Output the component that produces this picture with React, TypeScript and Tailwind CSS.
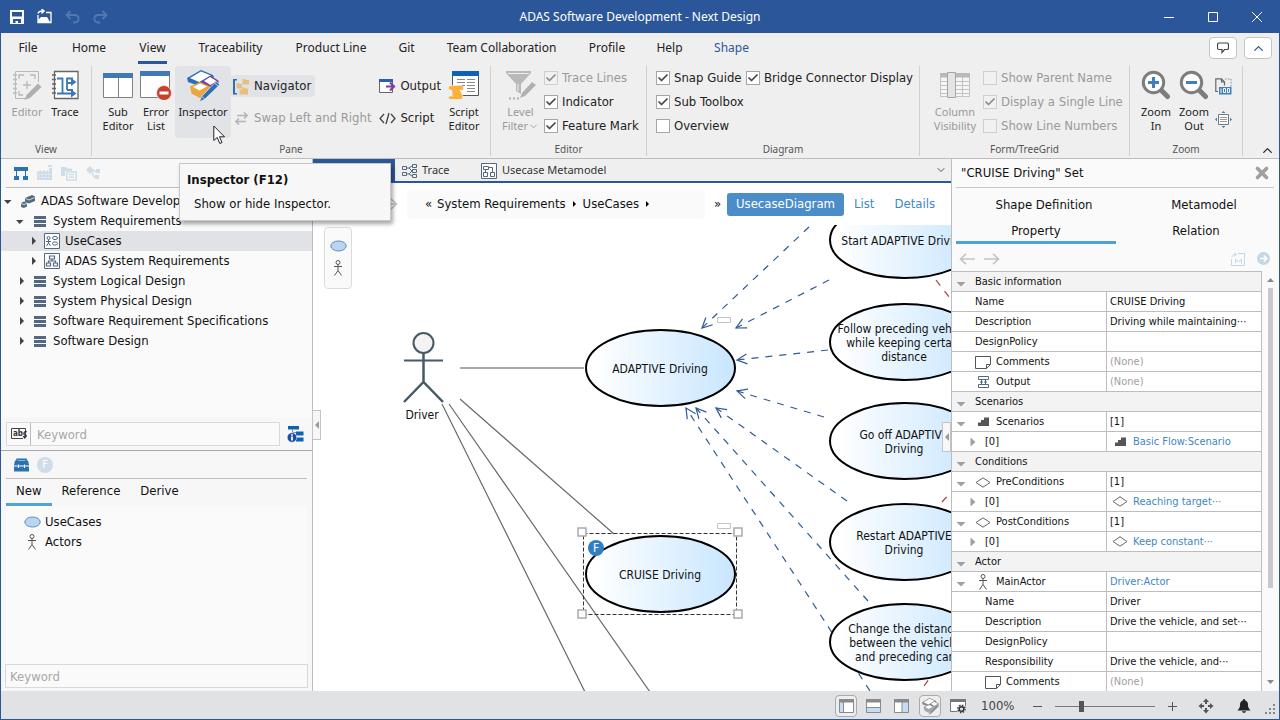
import { useState, type ReactNode } from "react";
import { Check, ChevronDown, ChevronUp, X } from "lucide-react";

const TABS = [
  { name: "File", className: "w-[54px]" },
  { name: "Home", className: "w-[68px]" },
  { name: "View", className: "w-[59px]" },
  { name: "Traceability", className: "w-[97px]" },
  { name: "Product Line", className: "w-[104px]" },
  { name: "Git", className: "w-[47px]" },
  { name: "Team Collaboration", className: "w-[143px]" },
  { name: "Profile", className: "w-[68px]" },
  { name: "Help", className: "w-[57px]" },
  { name: "Shape", className: "w-[67px] text-[#2b579a]" },
];

/* ---------- icons ---------- */

function SaveIcon() {
  return (
    <svg width="14" height="14" viewBox="0 0 14 14">
      <path fill="#fff" fillRule="evenodd" d="M0 0H14V14H0zM2 2V6.5H12V2zM3 9V13H5.5V11H8V13H11V9z" />
    </svg>
  );
}

function ReopenIcon() {
  return (
    <svg width="15" height="15" viewBox="0 0 15 15">
      <path fill="none" stroke="#fff" strokeWidth="1.3" d="M1 6V13.5H14V3.5H9" />
      <path fill="#fff" d="M1 13V11L4 8H10L13 13z" />
      <path fill="none" stroke="#fff" strokeWidth="1.5" d="M1 4.500C1.500 2.500 3 2 6 2M4.500 0L7 2L4.500 4.500" />
    </svg>
  );
}

function UndoIcon({ flip = false }: { flip?: boolean }) {
  return (
    <svg width="15" height="14" viewBox="0 0 15 14" fill="none" stroke="#5378b0" strokeWidth="1.8" className={flip ? "-scale-x-100" : ""}>
      <path d="M5.500 1L1.500 5L5.500 9M1.500 5H9.500C15 5 15 12.500 9.500 12.500H8" />
    </svg>
  );
}

function EditorIcon() {
  return (
    <svg width="30" height="30" viewBox="0 0 30 30" fill="none" stroke="#b9b9b9">
      <path d="M3.500 1.500H26.500V12M16 28.500H3.500V1.500" />
      <path strokeWidth="1.5" d="M1 5H5M1 9.500H5M1 14H5M1 18.500H5M1 23H5" />
      <path strokeWidth="1.3" d="M7 9V5H12M18 5H23V9M7 21V25H11M15 11V19M11 15H19" />
      <path fill="#b0b0b0" stroke="none" d="M12.500 30L14.500 25L26 13.500L29.500 17L18 28z" />
    </svg>
  );
}

function TraceIcon() {
  return (
    <svg width="28" height="30" viewBox="0 0 28 30" fill="none">
      <path fill="#fff" stroke="#666" strokeWidth="1.3" d="M3.500 1.500H27V28.500H3.500z" />
      <path stroke="#666" strokeWidth="1.5" d="M1 5H5M1 9.500H5M1 14H5M1 18.500H5M1 23H5" />
      <path stroke="#3a78b8" strokeWidth="1.8" d="M6 8.500H11.500V23.500H22M6 23.500H11.500M16 20V8.500H22M16 20H22M16 13H22" />
      <path fill="#3a78b8" d="M20 8L25.500 12L20 16zM20 19.500L25.500 23.500L20 27.500z" />
    </svg>
  );
}

function SubEditorIcon() {
  return (
    <svg width="30" height="30" viewBox="0 0 30 30">
      <path fill="#fff" stroke="#808080" d="M.5 3.500H29.500V27.500H.5zM15.500 8V27" />
      <path fill="#4079b5" d="M0 3H30V8H0z" />
    </svg>
  );
}

function ErrorListIcon() {
  return (
    <svg width="32" height="30" viewBox="0 0 32 30">
      <path fill="#fff" stroke="#808080" d="M.5 1.500H29.500V27.500H.5z" />
      <path fill="#4079b5" d="M0 1H30V6H0z" />
      <circle cx="24" cy="23" r="7.500" fill="#c9402c" stroke="#efefef" strokeWidth=".8" />
      <path fill="#fff" d="M19.500 21.500H28.500V24.500H19.500z" />
    </svg>
  );
}

function InspectorIcon({ mono = false }: { mono?: boolean }) {
  const blue = mono ? "#8a8a8a" : "#2c6fb5";
  const purple = mono ? "#8a8a8a" : "#7b3fa0";
  const orange = mono ? "#a5a5a5" : "#eda63f";
  return (
    <svg className={mono ? "size-[17px]" : "size-8"} viewBox="0 0 32 32">
      <path fill={blue} d="M0 8L14 0L26 5L27 7.500L12 16L1 12z" />
      <path fill="#fff" d="M3 8L14 1.500L24 5.500L12 12z" />
      <path fill={purple} d="M15 11.500L23 5.500L31.500 10.500V13L24 18.500L15 14z" />
      <path fill="#fff" d="M17 11L23 7L29.500 11L23.500 15z" />
      <path fill={orange} d="M3 16.500L13 12L23 16.500V21L13.500 28.500L4.500 23.500z" />
      <path fill="#fff" d="M6 17L13.500 13.500L20 16.500L12.500 20.500z" />
      <path fill={blue} stroke="#efefef" strokeWidth=".7" d="M12.500 32L14.500 26.500L29 11.500L33 14.500L18 29z" />
      <path stroke="#fff" strokeWidth=".7" d="M15 26.500L17.500 28.800M27.500 13L31 16" />
    </svg>
  );
}

function NavigatorIcon() {
  return (
    <svg width="17" height="17" viewBox="0 0 17 17">
      <path fill="#2c6fb5" d="M0 1H4V2.500H2V15H4V16.500H0z" />
      <path fill="#e8bf7d" d="M9.500 1H12L13 2H16V6.500H9.500zM3.500 5H6L7 6H9V10.500H3.500zM9 9.500H11.500L12.500 10.500H15V16.500H6.500V11.500H9z" />
    </svg>
  );
}

function SwapIcon() {
  return (
    <svg width="13" height="13" viewBox="0 0 13 13" fill="none" stroke="#b5b5b5" strokeWidth="1.6">
      <path d="M2 3.500H12M9 .5L12 3.500L9 6.500M11 9.500H1M4 6.500L1 9.500L4 12.500" />
    </svg>
  );
}

function OutputIcon() {
  return (
    <svg width="17" height="15" viewBox="0 0 17 15">
      <path fill="#fff" stroke="#666" d="M.5 1V13.500H13.500V1z" />
      <path fill="#2c5fa5" d="M0 0H14V3H0z" />
      <path stroke="#fff" strokeWidth="4" d="M5 7.500H13" />
      <path fill="none" stroke="#7b3fa0" strokeWidth="2.200" d="M7 7.500H14.500M11 3.500L15 7.500L11 11.500" />
    </svg>
  );
}

function ScriptIcon() {
  return (
    <svg width="17" height="13" viewBox="0 0 17 13" fill="none" stroke="#444" strokeWidth="1.300">
      <path d="M5 2L1 6.500L5 11M12 2L16 6.500L12 11M10 1L7 12" />
    </svg>
  );
}

function ScriptEditorIcon() {
  return (
    <svg width="32" height="30" viewBox="0 0 32 30">
      <path fill="#fff" stroke="#555" d="M4.500 2V25.500H30.500V2z" />
      <path fill="#0f60b8" d="M4 1H31V6H4z" />
      <path stroke="#888" d="M9 9.500H17M9 12.500H17M9 15.500H17M19 9.500H27M19 12.500H27M19 15.500H27M19 18.500H27M19 21.500H27" />
      <path fill="#fbb03b" stroke="#efefef" strokeWidth=".8" d="M3 15.500H13C16.500 15.500 16 20.500 13.500 20.500L12 20L14.500 25C15.500 28 14 29.500 12 29.500H3C0 29.500 0 26 2 26H5L3.500 20H2C0 20 0 15.500 3 15.500z" />
    </svg>
  );
}

function FilterIcon() {
  return (
    <svg width="32" height="30" viewBox="0 0 32 30">
      <path fill="#b9b9b9" d="M1 1H26V3L16 14V24L11 21V14L1 3z" />
      <path stroke="#efefef" d="M3 3.500H24" />
      <path stroke="#efefef" d="M13 14V21" />
      <path fill="#b0b0b0" d="M15 28L17 23L27 12L31 15L20 26z" />
      <path stroke="#b0b0b0" strokeWidth="2" strokeDasharray="2 2" d="M4 28.500H16" />
    </svg>
  );
}

function ColumnsIcon() {
  return (
    <svg width="30" height="30" viewBox="0 0 30 30" fill="none" stroke="#c3c3c3">
      <path fill="#f6f6f6" d="M.5 3.500H29.500V26.500H.5zM0 11.500H30M0 15.500H30M0 19.500H30M0 23.500H30M22.500 7V27" />
      <path fill="#b9b9b9" stroke="none" d="M0 3H30V7.500H0z" />
      <path fill="#e4e4e4" stroke="#a5a5a5" d="M7.500 2.500H15.500V27.500H7.500z" />
    </svg>
  );
}

function MagnifierIcon({ plus = false }: { plus?: boolean }) {
  return (
    <svg width="30" height="30" viewBox="0 0 30 30">
      <path stroke="#7d7d7d" strokeWidth="5" strokeLinecap="round" d="M20 20L26.500 26.500" />
      <circle cx="12.500" cy="12.500" r="10.200" fill="#fff" stroke="#7d7d7d" strokeWidth="3" />
      <path stroke="#3f7fbf" strokeWidth="3" d={plus ? "M7 12.500H18M12.500 7V18" : "M7 12.500H18"} />
    </svg>
  );
}

function Zoom100Icon() {
  return (
    <svg width="17" height="17" viewBox="0 0 17 17" fill="none">
      <path stroke="#666" strokeWidth="1.200" d="M3 13.500H.8V.8H6.500L9.500 4V7.500M6.500 1V4H9.500" />
      <path stroke="#888" strokeDasharray="1.500 1.500" d="M10 1H16V9" />
      <path fill="#3f7fbf" d="M4 9H16.500V16.500H4z" />
      <path stroke="#fff" d="M6 10.500V15M8.500 10.500H10.500V14.500H8.500zM12.500 10.500H14.500V14.500H12.500z" />
    </svg>
  );
}

function FitIcon() {
  return (
    <svg width="17" height="17" viewBox="0 0 17 17">
      <path fill="#fff" stroke="#777" d="M3.500 3.500H13.500V13.500H3.500z" />
      <path stroke="#999" d="M5 6.500H12M5 8.500H12M5 10.500H12" />
      <path fill="#3f7fbf" d="M6.500 2L8.500 0L10.500 2zM6.500 15L8.500 17L10.500 15zM2 6.500L0 8.500L2 10.500zM15 6.500L17 8.500L15 10.500z" />
    </svg>
  );
}

function TreeViewIcon() {
  return (
    <svg width="14" height="13" viewBox="0 0 14 13">
      <path fill="#2a72b0" d="M0 0H14V4H0zM0 9H5V13H0zM9 9H14V13H9z" />
      <path stroke="#2a72b0" d="M2.500 4V9M11.500 4V9" />
    </svg>
  );
}

function FactoryIcon() {
  return (
    <svg width="17" height="16" viewBox="0 0 17 16" fill="#cfdde8">
      <path d="M0 15V7L4 5V7L8 5V7L11 5V7H12V3H15V15z" />
      <path d="M11 0H15V2H11z" />
      <path stroke="#f7f7f7" strokeDasharray="1.500 1.500" d="M2 9.500H14M2 12.500H14" />
    </svg>
  );
}

function CopyIcon() {
  return (
    <svg width="16" height="15" viewBox="0 0 16 15">
      <path fill="#cfdde8" d="M0 1H5L6 2.500H11V5H4V10H0z" />
      <path fill="#f7f7f7" stroke="#cfdde8" strokeWidth="1.500" d="M5.800 6H15.200V14H5.800zM8 8.500H13M8 11.200H13" />
    </svg>
  );
}

function LinkIcon() {
  return (
    <svg width="15" height="14" viewBox="0 0 15 14" fill="#cfdde8">
      <path d="M0 4L4 0L8 4L4 8zM10 3H14V7H10zM9 9H13V13H9z" />
      <path fill="none" stroke="#cfdde8" strokeWidth="1.500" d="M6 6L8 11H10M7 5H11" />
    </svg>
  );
}

function CubesIcon() {
  return (
    <svg width="14" height="13" viewBox="0 0 14 13" fill="#54687f">
      <path d="M4 3L11 0L14 1.500V6L8 8.500L4 7z" />
      <path d="M0 8L3 6.500L6 8V11.500L3 13L0 12z" />
      <path stroke="#fafafa" strokeWidth=".8" fill="none" d="M4.500 3.500L8 5L13.500 2.500M0 8.500L3 9.500L6 8.500" />
    </svg>
  );
}

function BarsIcon() {
  return (
    <svg width="12" height="11" viewBox="0 0 12 11" fill="#54687f">
      <path d="M0 0H12V3H0zM0 4H12V7H0zM0 8H12V11H0z" />
    </svg>
  );
}

function UseCasePackageIcon() {
  return (
    <svg width="16" height="16" viewBox="0 0 16 16" fill="none" stroke="#54687f">
      <path fill="#fff" d="M.5 .5H15.500V15.500H.5z" />
      <circle cx="4.500" cy="5" r="1.500" />
      <path d="M2 8.500H7M4.500 6.500V10L2.500 13M4.500 10L6.500 13" />
      <ellipse cx="11" cy="5" rx="2.500" ry="1.600" />
      <ellipse cx="11" cy="10.500" rx="2.500" ry="1.600" />
    </svg>
  );
}

function MetamodelIcon() {
  return (
    <svg width="16" height="16" viewBox="0 0 16 16" fill="none" stroke="#54687f">
      <path fill="#fff" d="M.5 .5H15.500V15.500H.5z" />
      <path strokeWidth="1.200" d="M5.500 3H10.500V6H5.500zM2.500 10H6.500V13H2.500zM9.500 10H13.500V13H9.500zM8 6V8M4.500 10V8H11.500V10" />
    </svg>
  );
}

function TabMetamodelIcon() {
  return (
    <svg width="16" height="16" viewBox="0 0 16 16" fill="none" stroke="#54687f">
      <path fill="#fff" d="M.5 .5H15.500V15.500H.5z" />
      <path d="M2.500 3.500H7.500V6.500H2.500zM2.500 9.500H6.500V13.500H2.500zM9.500 9.500H13.500V13.500H9.500zM4.500 6.500V9.500M7.500 4.500H11.500V9.500" />
    </svg>
  );
}

function TraceTabIcon() {
  return (
    <svg width="15" height="14" viewBox="0 0 15 14" fill="none" stroke="#54687f">
      <path d="M.5 2.500H4.500V5.500H.5zM.5 8.500H4.500V11.500H.5zM10.500 .5H14.500V3.500H10.500zM10.500 5.500H14.500V8.500H10.500zM10.500 10.500H14.500V13.500H10.500z" />
      <path d="M4.500 4H7L10 2M7 4L10 7M4.500 10H7L10 7M7 10L10 12" />
    </svg>
  );
}

function TreeSearchIcon() {
  return (
    <svg width="17" height="17" viewBox="0 0 17 17">
      <path fill="#0f60b8" d="M1 0H12V3.500H1zM9 5.500H16.500V9.500H9zM9 11.500H16.500V15.500H9z" />
      <path stroke="#888" fill="none" d="M5.500 3.500V6.500H9" />
      <circle cx="5" cy="11.500" r="4.800" fill="#174ea6" stroke="#f7f7f7" strokeWidth=".6" />
      <path stroke="#fff" strokeWidth="1.800" d="M5 8.300V9.800M5 10.500V14.500" />
    </svg>
  );
}

function ToolboxIcon() {
  return (
    <svg width="15" height="14" viewBox="0 0 15 14">
      <path fill="none" stroke="#2a72b0" strokeWidth="1.500" d="M3 3V1.200H12V3" />
      <path fill="#2a72b0" d="M1 2.500H14L15 7V13.500H0V7z" />
      <path stroke="#fff" d="M0 8H15M4.500 6.500V10M10.500 6.500V10" />
    </svg>
  );
}

function EllipseIcon() {
  return (
    <svg width="17" height="12" viewBox="0 0 17 12">
      <ellipse cx="8.500" cy="6" rx="7.700" ry="5" fill="#bcd5ef" stroke="#5a8ac6" />
    </svg>
  );
}

function ActorIcon() {
  return (
    <svg width="10" height="16" viewBox="0 0 10 16" fill="none" stroke="#555">
      <circle cx="5" cy="2.500" r="2" />
      <path d="M1 6.500H9M5 4.500V10.500L1.500 15.500M5 10.500L8.500 15.500" />
    </svg>
  );
}

function NoteIcon() {
  return (
    <svg width="16" height="13" viewBox="0 0 16 13" fill="none" stroke="#555">
      <path d="M.5 .5H15.500V8.500L11.500 12.500H.5zM11.500 12.500V8.500H15.500" />
    </svg>
  );
}

function OutputFieldIcon() {
  return (
    <svg width="11" height="12" viewBox="0 0 11 12" fill="none" stroke="#54687f">
      <path d="M.5 .5H10.500V3.500H.5zM.5 8.500H10.500V11.500H.5zM3.500 3.500V8.500M7.500 3.500V8.500M2 6H5M6 6H9" />
    </svg>
  );
}

function StepsIcon() {
  return (
    <svg width="11" height="10" viewBox="0 0 11 10" fill="#555">
      <path d="M0 9V5.500H3V3H6V.5H11V9z" />
    </svg>
  );
}

function DiamondIcon() {
  return (
    <svg width="16" height="11" viewBox="0 0 16 11">
      <path fill="none" stroke="#666" d="M1 5.500L8 .8L15 5.500L8 10.200z" />
    </svg>
  );
}

function TreeArrow({ open }: { open: boolean }) {
  return (
    <svg width="10" height="10" viewBox="0 0 10 10" fill="#444">
      <path d={open ? "M1 4H8.500L4.700 8z" : "M5 .8V9L9 5z"} />
    </svg>
  );
}

function RowArrow({ open }: { open: boolean }) {
  return (
    <svg width="10" height="10" viewBox="0 0 10 10" fill="#a0a0a0">
      <path d={open ? "M.5 3H9.500L5 7.500z" : "M2.500 .5V9.500L7.500 5z"} />
    </svg>
  );
}

function HistoryArrow({ flip = false }: { flip?: boolean }) {
  return (
    <svg width="16" height="12" viewBox="0 0 16 12" fill="none" stroke="#c4c4c4" strokeWidth="1.600" className={flip ? "-scale-x-100" : ""}>
      <path d="M7 .8L1.500 6L7 11.200M1.500 6H16" />
    </svg>
  );
}

function PaneIcon({ fill, line }: { fill: string; line: string }) {
  return (
    <svg width="15" height="14" viewBox="0 0 15 14">
      <path fill="#fff" stroke="#8a8a8a" d="M.5 1V13.500H14.500V1z" />
      <path fill="#c5dcf5" d={fill} />
      <path stroke="#8a8a8a" d={line} />
      <path fill="#8a8a8a" d="M0 0H15V3.500H0z" />
    </svg>
  );
}

function PaneGearIcon() {
  return (
    <svg width="17" height="15" viewBox="0 0 17 15">
      <path fill="#fff" stroke="#777" d="M.5 1V12.500H15.500V1z" />
      <path fill="#777" d="M0 0H16V3H0z" />
      <circle cx="11.500" cy="10" r="5" fill="#e3e4e6" />
      <circle cx="11.500" cy="10" r="2.300" fill="none" stroke="#333" strokeWidth="1.400" />
      <circle cx="11.500" cy="10" r="3.600" fill="none" stroke="#333" strokeWidth="1.400" strokeDasharray="1.400 1.430" />
    </svg>
  );
}

/* ---------- ribbon ---------- */

type BigButtonProps = { icon: ReactNode; lines: string[]; className: string; disabled?: boolean; dropDown?: boolean };

function BigButton({ icon, lines, className, disabled, dropDown }: BigButtonProps) {
  return (
    <button
      disabled={disabled}
      className={`flex h-[72px] shrink-0 flex-col items-center rounded-sm pt-1 text-[11px] leading-[14px] text-[#222] disabled:text-[#9a9a9a] ${className}`}
    >
      <span className="flex h-[35px] items-start">{icon}</span>
      {lines.map((line, i) => (
        <span key={line} className="flex items-center whitespace-nowrap">
          {line}
          {dropDown && i === lines.length - 1 && <ChevronDown size={11} className="shrink-0" />}
        </span>
      ))}
    </button>
  );
}

function SmallButton({ icon, label, className = "", disabled }: { icon: ReactNode; label: string; className?: string; disabled?: boolean }) {
  return (
    <button
      disabled={disabled}
      className={`flex h-[22px] items-center gap-1 rounded-sm font-['DejaVu_Sans_Condensed','DejaVu_Sans',sans-serif] text-[13px] whitespace-nowrap text-[#222] disabled:text-[#9a9a9a] ${className}`}
    >
      <span className="flex w-[17px] justify-center">{icon}</span>
      {label}
    </button>
  );
}

function CheckItem({ label, checked = false, disabled }: { label: string; checked?: boolean; disabled?: boolean }) {
  return (
    <label
      className={`flex h-6 items-center gap-1 font-['DejaVu_Sans_Condensed','DejaVu_Sans',sans-serif] text-[13px] whitespace-nowrap ${disabled ? "text-[#9a9a9a]" : "text-[#222]"}`}
    >
      <span className="grid place-items-center">
        <input
          type="checkbox"
          defaultChecked={checked}
          disabled={disabled}
          className="peer col-start-1 row-start-1 size-[14px] appearance-none border border-[#a5a5aa] bg-white disabled:border-[#cfcfd2] disabled:bg-[#f1f1f1]"
        />
        <Check
          size={12}
          strokeWidth={3.5}
          className={`pointer-events-none invisible col-start-1 row-start-1 peer-checked:visible ${disabled ? "text-[#8c8c8c]" : "text-[#444]"}`}
        />
      </span>
      {label}
    </label>
  );
}

function Group({ name, className, children }: { name: string; className: string; children: ReactNode }) {
  return (
    <section className={`flex h-[90px] shrink-0 flex-col border-r border-[#d0d0d2] ${className}`}>
      <div className="flex h-[77px] items-start">{children}</div>
      <h2 className="text-center text-[10px] leading-[13px] text-[#555]">{name}</h2>
    </section>
  );
}

function Ribbon() {
  return (
    <div className="flex h-[93px] shrink-0 items-start border-b border-[#bdbdbf] bg-[#efefef]">
      <Group name="View" className="w-[91px]">
        <BigButton icon={<EditorIcon />} lines={["Editor"]} className="ml-[7px] w-[38px]" disabled />
        <BigButton icon={<TraceIcon />} lines={["Trace"]} className="w-[38px]" />
      </Group>
      <Group name="Pane" className="w-[399px]">
        <BigButton icon={<SubEditorIcon />} lines={["Sub", "Editor"]} className="ml-[7px] w-[38px]" />
        <BigButton icon={<ErrorListIcon />} lines={["Error", "List"]} className="w-[38px]" />
        <BigButton icon={<InspectorIcon />} lines={["Inspector"]} className="w-14 bg-[#e1e3e6]" />
        <div className="flex flex-col items-start gap-[10px] pt-[9px]">
          <SmallButton icon={<NavigatorIcon />} label="Navigator" className="bg-[#e1e3e6] pr-1 pl-[2px]" />
          <SmallButton icon={<SwapIcon />} label="Swap Left and Right" className="pl-[2px]" disabled />
        </div>
        <div className="ml-auto flex flex-col items-start gap-[10px] pt-[9px]">
          <SmallButton icon={<OutputIcon />} label="Output" />
          <SmallButton icon={<ScriptIcon />} label="Script" />
        </div>
        <BigButton icon={<ScriptEditorIcon />} lines={["Script", "Editor"]} className="mr-[6px] ml-[3px] w-10" />
      </Group>
      <Group name="Editor" className="w-[156px]">
        <BigButton icon={<FilterIcon />} lines={["Level", "Filter"]} className="ml-[6px] w-[47px]" disabled dropDown />
        <div>
          <CheckItem label="Trace Lines" checked disabled />
          <CheckItem label="Indicator" checked />
          <CheckItem label="Feature Mark" checked />
        </div>
      </Group>
      <Group name="Diagram" className="w-[273px]">
        <div className="ml-[9px] grid grid-cols-[90px_auto]">
          <CheckItem label="Snap Guide" checked />
          <CheckItem label="Bridge Connector Display" checked />
          <CheckItem label="Sub Toolbox" checked />
          <div />
          <CheckItem label="Overview" />
        </div>
      </Group>
      <Group name="Form/TreeGrid" className="w-[210px]">
        <BigButton icon={<ColumnsIcon />} lines={["Column", "Visibility"]} className="ml-[11px] w-[48px]" disabled />
        <div className="ml-1">
          <CheckItem label="Show Parent Name" disabled />
          <CheckItem label="Display a Single Line" checked disabled />
          <CheckItem label="Show Line Numbers" disabled />
        </div>
      </Group>
      <Group name="Zoom" className="w-[113px]">
        <BigButton icon={<MagnifierIcon plus />} lines={["Zoom", "In"]} className="ml-[7px] w-[38px]" />
        <BigButton icon={<MagnifierIcon />} lines={["Zoom", "Out"]} className="w-[38px]" />
        <div className="flex flex-col gap-4 pt-3 pl-[2px]">
          <button aria-label="Zoom to 100%">
            <Zoom100Icon />
          </button>
          <button aria-label="Fit to window">
            <FitIcon />
          </button>
        </div>
      </Group>
      <button aria-label="Collapse ribbon" className="mr-1 ml-auto self-end text-[#222]">
        <ChevronUp size={15} />
      </button>
    </div>
  );
}

/* ---------- left side ---------- */

const TREE = [
  { label: "ADAS Software Development", pad: "pl-[2px]", open: true, icon: <CubesIcon /> },
  { label: "System Requirements", pad: "pl-[14px]", open: true, icon: <BarsIcon /> },
  { label: "UseCases", pad: "pl-[26px]", open: false, icon: <UseCasePackageIcon />, selected: true },
  { label: "ADAS System Requirements", pad: "pl-[26px]", open: false, icon: <MetamodelIcon /> },
  { label: "System Logical Design", pad: "pl-[14px]", open: false, icon: <BarsIcon /> },
  { label: "System Physical Design", pad: "pl-[14px]", open: false, icon: <BarsIcon /> },
  { label: "Software Requirement Specifications", pad: "pl-[14px]", open: false, icon: <BarsIcon /> },
  { label: "Software Design", pad: "pl-[14px]", open: false, icon: <BarsIcon /> },
];

function LeftPane() {
  return (
    <aside className="flex w-[312px] shrink-0 flex-col border-r border-[#bdbdbf] bg-[#f7f7f7]">
      <div className="ml-[5px] flex h-[29px] items-center gap-2 border-b border-[#bdbdbf] pl-2">
        <button aria-label="Model tree" className="w-[15px]">
          <TreeViewIcon />
        </button>
        <button aria-label="Product line" className="w-4">
          <FactoryIcon />
        </button>
        <button aria-label="Copies" className="w-4">
          <CopyIcon />
        </button>
        <button aria-label="Links" className="ml-px w-4">
          <LinkIcon />
        </button>
      </div>
      <ul role="tree" className="flex-1 bg-[#fafafa] pt-[3px] text-[13px]">
        {TREE.map((node) => (
          <li
            key={node.label}
            role="treeitem"
            aria-selected={!!node.selected}
            className={`flex h-5 items-center overflow-hidden whitespace-nowrap ${node.pad} ${node.selected ? "bg-[#e1e2e6]" : ""}`}
          >
            <TreeArrow open={node.open} />
            <span className="mr-1 ml-[6px] flex w-[18px] justify-center">{node.icon}</span>
            {node.label}
          </li>
        ))}
      </ul>
      <div className="flex h-8 items-center pl-[5px]">
        <div className="flex h-6 flex-1 items-center border border-[#d9d9db] bg-[#fafafa]">
          <button aria-label="Match options" className="flex h-full w-6 items-center justify-center border-r border-[#bdbdbf]">
            <svg width="16" height="12" viewBox="0 0 16 12">
              <path fill="none" stroke="#444" d="M12 10.500H.5V.5H14.500V7" />
              <text x="2" y="8" fontSize="8" fontWeight="bold" fill="#333">
                abc
              </text>
              <path fill="#333" d="M11.500 8H16L13.700 11z" />
            </svg>
          </button>
          <input
            aria-label="Filter model"
            placeholder="Keyword"
            className="h-full min-w-0 flex-1 pl-[6px] text-[13px] outline-none placeholder:text-[#a8a8a8]"
          />
        </div>
        <button aria-label="Find in tree" className="mr-2 ml-[7px] w-[17px]">
          <TreeSearchIcon />
        </button>
      </div>
      <div className="flex h-[241px] flex-col border-t border-[#a8a8aa]">
        <div className="mx-[5px] flex h-[28px] items-center gap-2 border-b border-[#bdbdbf] pl-2">
          <button aria-label="Toolbox">
            <ToolboxIcon />
          </button>
          <button aria-label="Features" className="size-4 rounded-full bg-[#cfdde8] text-[11px] leading-4 text-white">
            F
          </button>
        </div>
        <div role="tablist" className="flex h-[27px] pl-[5px] text-[13px]">
          <button role="tab" aria-selected className="border-b-[3px] border-[#4fa3d9] px-[10px]">
            New
          </button>
          <button role="tab" className="ml-[2px] px-2 pb-[3px]">
            Reference
          </button>
          <button role="tab" className="ml-1 px-2 pb-[3px]">
            Derive
          </button>
        </div>
        <ul className="mx-[5px] flex-1 bg-[#fafafa] pt-[6px] text-[13px]">
          <li className="flex h-5 items-center pl-[17px]">
            <span className="mr-1 flex w-[18px] justify-center">
              <EllipseIcon />
            </span>
            UseCases
          </li>
          <li className="flex h-5 items-center pl-[17px]">
            <span className="mr-1 flex w-[18px] justify-center">
              <ActorIcon />
            </span>
            Actors
          </li>
        </ul>
        <input
          aria-label="Filter toolbox"
          placeholder="Keyword"
          className="mx-1 mb-[3px] h-6 border border-[#d9d9db] bg-[#fafafa] pl-1 text-[13px] outline-none placeholder:text-[#a8a8a8]"
        />
      </div>
    </aside>
  );
}

/* ---------- diagram ---------- */

const USE_CASES = [
  { x: 660, y: 368, base: 373, lines: ["ADAPTIVE Driving"] },
  { x: 660, y: 574, base: 579, lines: ["CRUISE Driving"] },
  { x: 904, y: 240, base: 245, lines: ["Start ADAPTIVE Driving"] },
  { x: 904, y: 342, base: 333, lines: ["Follow preceding vehicle", "while keeping certain", "distance"] },
  { x: 904, y: 441, base: 439, lines: ["Go off ADAPTIVE", "Driving"] },
  { x: 904, y: 542, base: 540, lines: ["Restart ADAPTIVE", "Driving"] },
  { x: 904, y: 642, base: 633, lines: ["Change the distance", "between the vehicle", "and preceding car"] },
];

const INCLUDES = [
  "M809 227L702 328",
  "M829 280L736 328",
  "M828 350L737 360",
  "M824 417L737 391",
  "M847 501L716 408",
  "M868 601L696 408",
  "M870 691L686 408",
];

const HANDLES = [
  [582, 532],
  [738, 532],
  [582, 614],
  [738, 614],
];

function Diagram() {
  return (
    <svg className="absolute inset-0 size-full">
      <defs>
        <linearGradient id="node">
          <stop offset="0.05" stopColor="#fff" />
          <stop offset="1" stopColor="#c8e6ff" />
        </linearGradient>
        <marker id="head" viewBox="0 0 12 12" refX="11" refY="6" markerWidth="12" markerHeight="12" markerUnits="userSpaceOnUse" orient="auto">
          <path d="M1 1L11 6L1 11" fill="none" stroke="#2f5b95" strokeWidth="1.200" />
        </marker>
      </defs>
      <g transform="translate(-313 -225)" fill="#111">
        <path d="M460 368H584" strokeWidth="2" stroke="#a8a8a8" />
        <path d="M460 399L614 534M449 404L650 692M442 404L585 692" stroke="#6a6a6a" strokeWidth="1.200" />
        <g fill="none" stroke="#455a66" strokeWidth="2">
          <circle cx="423.500" cy="343" r="10" fill="#f3f3f3" />
          <path d="M404 360.500H443" />
          <path strokeWidth="2.500" d="M423.500 353V382M404 402L423.500 382L443 402" />
        </g>
        {INCLUDES.map((d) => (
          <path key={d} d={d} fill="none" stroke="#2f5b95" strokeWidth="1.200" strokeDasharray="7 7" markerEnd="url(#head)" />
        ))}
        <path fill="none" stroke="#a33c3c" strokeWidth="1.200" strokeDasharray="7 7" d="M936 280L956 306M942 502L952 491M924 686L929 679" />
        <path fill="#fff" stroke="#c4c4c4" d="M717.500 317.500H730.500V322.500H717.500zM717.500 523.500H730.500V528.500H717.500z" />
        {USE_CASES.map((node) => (
          <g key={node.base}>
            <ellipse cx={node.x + 0.5} cy={node.y} rx="74.500" ry="38" fill="url(#node)" stroke="#000" strokeWidth="2" />
            {node.lines.map((line, i) => (
              <text key={line} x={node.x} y={node.base + i * 14} textAnchor="middle">
                {line}
              </text>
            ))}
          </g>
        ))}
        <text x="422" y="419" textAnchor="middle">
          Driver
        </text>
        <path d="M583.500 533.500H736.500V614.500H583.500z" fill="none" stroke="#333" strokeDasharray="4 2" />
        {HANDLES.map(([x, y]) => (
          <path key={`${x} ${y}`} transform={`translate(${x} ${y})`} d="M-4 -4H4V4H-4z" fill="#fff" stroke="#aaa" strokeWidth="1.500" />
        ))}
        <circle cx="596" cy="548" r="8" fill="#2f80c3" />
        <text x="596" y="552" textAnchor="middle" fill="#fff">
          F
        </text>
      </g>
    </svg>
  );
}

function SplitterHandle({ className }: { className: string }) {
  return (
    <button aria-label="Collapse pane" className={`absolute flex h-[30px] w-[9px] items-center justify-center border border-[#c3c3c5] bg-[#f7f7f7] ${className}`}>
      <svg width="5" height="8" viewBox="0 0 5 8" fill="#999">
        <path d="M5 0V8L1 4z" />
      </svg>
    </button>
  );
}

function Crumb() {
  return (
    <svg width="17" height="8" viewBox="0 0 17 8">
      <path d="M7 1V7L10 4z" />
    </svg>
  );
}

function EditorArea() {
  return (
    <main className="relative flex min-w-0 flex-1 flex-col bg-white">
      <div role="tablist" className="flex h-6 shrink-0 items-center border-b-2 border-[#2b579a] bg-[#efefef] font-['Noto_Sans',sans-serif] text-[11px] text-[#333]">
        <button role="tab" aria-selected className="h-full w-[82px] bg-[#2b579a] text-white">
          UseCases
        </button>
        <button role="tab" className="flex w-[79px] items-center gap-[5px] pt-px pl-[7px]">
          <TraceTabIcon />
          Trace
        </button>
        <button role="tab" className="flex items-center gap-[5px] pt-px pl-[7px]">
          <TabMetamodelIcon />
          Usecase Metamodel
        </button>
        <button aria-label="More editors" className="mr-1 ml-auto text-[#555]">
          <ChevronDown size={12} />
        </button>
      </div>
      <div className="flex h-[42px] shrink-0 items-center text-[13px]">
        <button aria-label="Forward" className="ml-[69px]">
          <HistoryArrow flip />
        </button>
        <nav className="ml-[9px] flex h-[29px] w-[298px] items-center rounded bg-[#fafafa] pl-[18px]">
          <span className="w-3">«</span>
          <a href="#system-requirements">System Requirements</a>
          <Crumb />
          <a href="#usecases">UseCases</a>
          <Crumb />
        </nav>
        <span className="ml-[9px] w-[13px]">»</span>
        <button className="h-[23px] rounded-[3px] bg-[#4a8dc9] px-[9px] text-white">UsecaseDiagram</button>
        <button className="ml-[10px] text-[#3f86c6]">List</button>
        <button className="ml-5 text-[#3f86c6]">Details</button>
      </div>
      <div className="relative flex-1 overflow-hidden text-xs">
        <Diagram />
        <div className="absolute top-[2px] left-[11px] flex h-[62px] w-7 flex-col items-center gap-2 rounded-sm border border-[#dcdcde] bg-[#fafafa] pt-3">
          <EllipseIcon />
          <ActorIcon />
        </div>
      </div>
      <SplitterHandle className="top-[251px] -left-px" />
      <SplitterHandle className="top-[263px] right-0" />
    </main>
  );
}

/* ---------- inspector ---------- */

type Row = {
  label: string;
  kind?: "section" | "none" | "link";
  pad: string;
  open?: boolean;
  icon?: ReactNode;
  value?: string;
  valueIcon?: ReactNode;
};

const ROWS: Row[] = [
  { label: "Basic information", kind: "section", pad: "pl-1", open: true },
  { label: "Name", pad: "pl-[23px]", value: "CRUISE Driving" },
  { label: "Description", pad: "pl-[23px]", value: "Driving while maintaining···" },
  { label: "DesignPolicy", pad: "pl-[23px]" },
  { label: "Comments", kind: "none", pad: "pl-[23px]", icon: <NoteIcon />, value: "(None)" },
  { label: "Output", kind: "none", pad: "pl-[23px]", icon: <OutputFieldIcon />, value: "(None)" },
  { label: "Scenarios", kind: "section", pad: "pl-1", open: true },
  { label: "Scenarios", pad: "pl-1", open: true, icon: <StepsIcon />, value: "[1]" },
  { label: "[0]", kind: "link", pad: "pl-4", open: false, value: "Basic Flow:Scenario", valueIcon: <StepsIcon /> },
  { label: "Conditions", kind: "section", pad: "pl-1", open: true },
  { label: "PreConditions", pad: "pl-1", open: true, icon: <DiamondIcon />, value: "[1]" },
  { label: "[0]", kind: "link", pad: "pl-4", open: false, value: "Reaching target···", valueIcon: <DiamondIcon /> },
  { label: "PostConditions", pad: "pl-1", open: true, icon: <DiamondIcon />, value: "[1]" },
  { label: "[0]", kind: "link", pad: "pl-4", open: false, value: "Keep constant···", valueIcon: <DiamondIcon /> },
  { label: "Actor", kind: "section", pad: "pl-1", open: true },
  { label: "MainActor", kind: "link", pad: "pl-1", open: true, icon: <ActorIcon />, value: "Driver:Actor" },
  { label: "Name", pad: "pl-[33px]", value: "Driver" },
  { label: "Description", pad: "pl-[33px]", value: "Drive the vehicle, and set···" },
  { label: "DesignPolicy", pad: "pl-[33px]" },
  { label: "Responsibility", pad: "pl-[33px]", value: "Drive the vehicle, and···" },
  { label: "Comments", kind: "none", pad: "pl-[33px]", icon: <NoteIcon />, value: "(None)" },
];

function PropertyRow({ row }: { row: Row }) {
  const section = row.kind === "section";
  return (
    <tr className={section ? "bg-[#f3f3f3]" : "bg-white"}>
      <th colSpan={section ? 2 : 1} className="h-5 border-b border-[#bdbdbf] p-0 font-normal">
        <span className={`flex items-center pt-px leading-[18px] ${row.pad}`}>
          {row.open !== undefined && (
            <span className={row.open ? "mr-[9px] pt-[3px]" : "mr-[7px]"}>
              <RowArrow open={row.open} />
            </span>
          )}
          {row.icon && <span className="mr-[5px] flex w-4 justify-center">{row.icon}</span>}
          {row.label}
        </span>
      </th>
      {!section && (
        <td className="border-b border-l border-[#bdbdbf] p-0 pl-[3px] whitespace-nowrap">
          {row.kind === "link" ? (
            <a href="#item" className="flex items-center text-[#3f86c6]">
              {row.valueIcon && <span className="mr-[5px] ml-[2px] flex w-4 justify-center">{row.valueIcon}</span>}
              {row.value}
            </a>
          ) : (
            <span className={row.kind === "none" ? "text-[#a0a0a0]" : ""}>{row.value}</span>
          )}
        </td>
      )}
    </tr>
  );
}

const INSPECTOR_TABS = [
  { name: "Shape Definition", className: "pl-4" },
  { name: "Metamodel", className: "pl-4" },
  { name: "Property", className: "" },
  { name: "Relation", className: "" },
];

function InspectorPane() {
  const [active, setActive] = useState("Property");

  return (
    <aside className="flex w-[328px] shrink-0 flex-col overflow-hidden border-l border-[#bdbdbf] bg-[#fafafa]">
      <header className="mr-[5px] ml-1 flex h-[29px] shrink-0 items-center justify-between border-b border-[#c8c8ca] pr-[3px] pl-[5px]">
        <h2 className="text-[13px]">"CRUISE Driving" Set</h2>
        <button aria-label="Close inspector" className="text-[#a0a0a0]">
          <X size={18} strokeWidth={5} />
        </button>
      </header>
      <div role="tablist" className="mr-[3px] ml-1 grid shrink-0 grid-cols-2 pt-1 text-[13px]">
        {INSPECTOR_TABS.map(({ name, className }) => (
          <button
            key={name}
            role="tab"
            aria-selected={name === active}
            onClick={() => setActive(name)}
            className={`h-[26px] border-b-[3px] pt-[2px] ${className} ${name === active ? "border-[#4fa3d9]" : "border-transparent"}`}
          >
            {name}
          </button>
        ))}
      </div>
      <div className="flex h-[27px] shrink-0 items-center gap-[9px] pt-[2px] pr-[9px] pl-[7px]">
        <button aria-label="Back">
          <HistoryArrow />
        </button>
        <button aria-label="Forward">
          <HistoryArrow flip />
        </button>
        <button aria-label="Go to metamodel" className="mr-[2px] ml-auto">
          <svg width="15" height="14" viewBox="0 0 15 14" fill="none" stroke="#c5d6e4">
            <path d="M.5 7V13.500H13.500V1.500H7M4.500 11.500V7L7.500 10L10.500 7V11.500M1 5C1 3 3 2.500 5 2.500M3 .5L5.500 2.500L3 4.500" />
          </svg>
        </button>
        <button aria-label="Go to model">
          <svg width="13" height="13" viewBox="0 0 13 13">
            <circle cx="6.500" cy="6.500" r="6.500" fill="#c5d6e4" />
            <path stroke="#fff" strokeWidth="1.600" fill="none" d="M3 6.500H9.500M6.800 3.500L9.800 6.500L6.800 9.500" />
          </svg>
        </button>
      </div>
      <div className="flex min-h-0 flex-1 items-start">
        <table className="w-[310px] table-fixed border-separate border-spacing-0 border-t border-r border-[#bdbdbf] text-left text-[11px] leading-[19px]">
          <colgroup>
            <col className="w-[154px]" />
            <col />
          </colgroup>
          <tbody>
            {ROWS.map((row, i) => (
              <PropertyRow key={i} row={row} />
            ))}
          </tbody>
        </table>
        <div className="flex flex-1 flex-col items-center self-stretch">
          <svg width="7" height="4" viewBox="0 0 7 4" className="mt-[7px] mb-[6px] shrink-0" fill="#888">
            <path d="M0 4L3.500 0L7 4z" />
          </svg>
          <div className="h-[300px] w-[5px] bg-[#c9c9cb]" />
          <svg width="7" height="4" viewBox="0 0 7 4" className="mt-auto mb-[7px] shrink-0" fill="#888">
            <path d="M0 0L3.500 4L7 0z" />
          </svg>
        </div>
      </div>
    </aside>
  );
}

/* ---------- status bar ---------- */

function StatusBar() {
  return (
    <footer className="flex h-7 shrink-0 items-center justify-end bg-[#e1e2e4] pt-[2px] text-[#444]">
      <button aria-label="Navigator pane" className="flex h-[22px] w-[22px] items-center justify-center rounded-sm border border-[#aaa] bg-[#eee]">
        <PaneIcon fill="M1 3H4V13H1z" line="M4.500 3V13" />
      </button>
      <button aria-label="Bottom pane" className="ml-[9px]">
        <PaneIcon fill="M1 9H14V13H1z" line="M1 8.500H14" />
      </button>
      <button aria-label="Sub editor" className="mr-[10px] ml-[13px]">
        <PaneIcon fill="M8 3H14V13H8z" line="M8 3V13" />
      </button>
      <button aria-label="Inspector pane" className="flex h-[22px] w-[22px] items-center justify-center rounded-sm border border-[#aaa] bg-[#eee]">
        <InspectorIcon mono />
      </button>
      <button aria-label="Pane settings" className="ml-[9px]">
        <PaneGearIcon />
      </button>
      <label htmlFor="zoom" className="ml-[14px] w-[51px] text-[13px]">
        100%
      </label>
      <button aria-label="Zoom out" className="h-4 w-[11px]">
        <svg width="11" height="11" viewBox="0 0 11 11" stroke="#555">
          <path d="M1 5.500H10" />
        </svg>
      </button>
      <input
        id="zoom"
        type="range"
        min="0"
        max="100"
        defaultValue="25"
        className="mx-3 h-4 w-[100px] appearance-none bg-transparent [&::-webkit-slider-runnable-track]:h-px [&::-webkit-slider-runnable-track]:bg-[#777] [&::-webkit-slider-thumb]:-mt-[5px] [&::-webkit-slider-thumb]:h-[11px] [&::-webkit-slider-thumb]:w-[5px] [&::-webkit-slider-thumb]:appearance-none [&::-webkit-slider-thumb]:bg-[#555]"
      />
      <button aria-label="Zoom in" className="h-4 w-[11px]">
        <svg width="11" height="11" viewBox="0 0 11 11" stroke="#555">
          <path d="M1 5.500H10M5.500 1V10" />
        </svg>
      </button>
      <button aria-label="Pan" className="ml-5">
        <svg width="16" height="16" viewBox="0 0 16 16" fill="#555">
          <path d="M8 .5L11 4H5zM8 15.500L11 12H5zM.5 8L4 5V11zM15.500 8L12 5V11z" />
          <path d="M7 4H9V6H7zM7 10H9V12H7zM4 7H6V9H4zM10 7H12V9H10z" />
        </svg>
      </button>
      <button aria-label="Notifications" className="ml-[23px]">
        <svg width="14" height="14" viewBox="0 0 14 14" fill="#222">
          <path d="M7 0C8 0 8.200 1 8.200 1.500C10.500 2 11 4 11 6C11 8.500 12 9.500 13.500 11.500H.5C2 9.500 3 8.500 3 6C3 4 3.500 2 5.800 1.500C5.800 1 6 0 7 0zM5 12.300H9C8.500 14.300 5.500 14.300 5 12.300z" />
        </svg>
      </button>
      <svg width="11" height="11" viewBox="0 0 11 11" fill="#888" className="mr-[3px] mb-1 ml-[14px] self-end">
        <path d="M8 0H10V2H8zM8 4H10V6H8zM4 4H6V6H4zM8 8H10V10H8zM4 8H6V10H4zM0 8H2V10H0z" />
      </svg>
    </footer>
  );
}

/* ---------- window ---------- */

function TitleBar() {
  return (
    <header className="grid h-[33px] shrink-0 grid-cols-[1fr_auto_1fr] items-center bg-[#2b579a] text-xs text-white">
      <div className="flex items-center gap-[13px] pl-[9px]">
        <button aria-label="Save">
          <SaveIcon />
        </button>
        <button aria-label="Reopen">
          <ReopenIcon />
        </button>
        <button aria-label="Undo" disabled>
          <UndoIcon />
        </button>
        <button aria-label="Redo" disabled>
          <UndoIcon flip />
        </button>
      </div>
      <h1>ADAS Software Development - Next Design</h1>
      <div className="flex justify-end">
        {[
          ["Minimize", "M0 5.500H10"],
          ["Maximize", "M.5 .5H9.500V9.500H.5z"],
          ["Close", "M0 0L10 10M10 0L0 10"],
        ].map(([name, d]) => (
          <button key={name} aria-label={name} className="flex h-[33px] w-11 items-center justify-center">
            <svg width="10" height="10" viewBox="0 0 10 10" fill="none" stroke="#fff">
              <path d={d} />
            </svg>
          </button>
        ))}
      </div>
    </header>
  );
}

function TabBar() {
  return (
    <nav className="flex h-[33px] shrink-0 items-center bg-[#efefef] text-xs text-[#222]">
      {TABS.map(({ name, className }) => (
        <button key={name} className={`flex h-[30px] shrink-0 justify-center whitespace-nowrap ${className}`}>
          <span className={`h-[29px] border-b-[3px] px-px pt-1 leading-[18px] ${name === "View" ? "border-[#2b579a]" : "border-transparent"}`}>
            {name}
          </span>
        </button>
      ))}
      <div className="ml-auto flex gap-[7px] pr-[7px] pb-[3px]">
        <button aria-label="Feedback" className="flex h-[22px] w-7 items-center justify-center rounded-sm border border-[#c4c4c6] bg-white">
          <svg width="12" height="12" viewBox="0 0 12 12" fill="none" stroke="#444" strokeWidth="1.200">
            <path d="M2 1H10C11 1 11.500 1.500 11.500 2.500V6C11.500 7 11 7.500 10 7.500H7.500L5 10.500V7.500H2C1 7.500 .5 7 .5 6V2.500C.5 1.500 1 1 2 1z" />
          </svg>
        </button>
        <button aria-label="Toggle ribbon" className="flex h-[22px] w-7 items-center justify-center rounded-sm border border-[#c4c4c6] bg-white text-[#2b579a]">
          <ChevronUp size={15} />
        </button>
      </div>
    </nav>
  );
}

export default function App() {
  return (
    <div className="relative flex h-screen flex-col overflow-hidden border-x border-b border-[#2b579a] bg-white font-['DejaVu_Sans_Condensed','DejaVu_Sans',sans-serif] text-[#111]">
      <div className="font-['Noto_Sans',sans-serif]">
        <TitleBar />
        <TabBar />
        <Ribbon />
      </div>
      <div className="flex min-h-0 flex-1">
        <LeftPane />
        <EditorArea />
        <InspectorPane />
      </div>
      <StatusBar />

      <div role="tooltip" className="absolute top-[163px] left-[178px] h-[58px] w-[212px] border border-[#c8c8ca] bg-[#f7f7f7] pt-2 pl-[7px] shadow-[2px_3px_4px_rgba(0,0,0,0.35)]">
        <p className="text-[13px] leading-4 font-bold">Inspector (F12)</p>
        <p className="mt-2 pl-[7px] text-[13px] leading-4">Show or hide Inspector.</p>
      </div>
      <svg width="13" height="20" viewBox="0 0 13 20" className="absolute top-[125px] left-[212px]">
        <path fill="#fff" stroke="#222" d="M.8 1V15.500L4.200 12.500L6.800 18.500L9 17.500L6.500 11.800H11.500z" />
      </svg>
    </div>
  );
}
